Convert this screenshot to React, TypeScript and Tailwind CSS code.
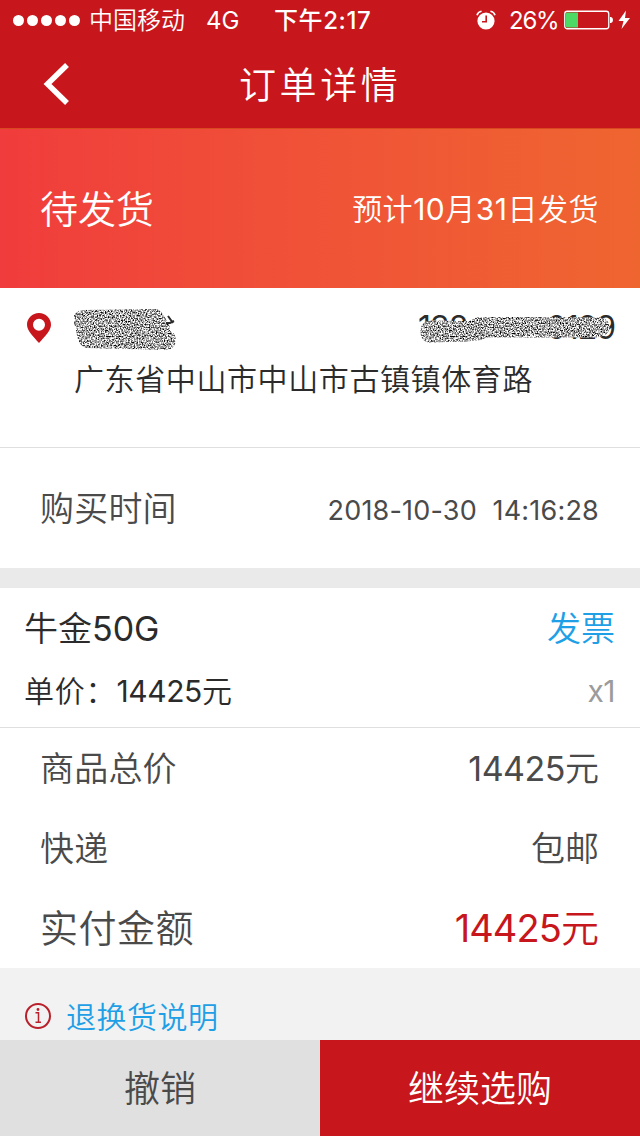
import {ReactNode} from "react";

interface RowProps {
    label: string,
    children: ReactNode
}

interface ScribbleProps {
    id: string,
    path: string,
    strokeWidth: number,
    className: string
}

function StatusBar() {
    return (
        <div className="flex h-10 items-center text-2xl leading-none">
            <div className="ml-[13px] flex gap-[3px]">
                {[0, 1, 2, 3, 4].map((dot) => (
                    <span key={dot} className="h-[11px] w-[11px] rounded-full bg-white"></span>
                ))}
            </div>
            <span className="ml-[9px] w-[97px] whitespace-nowrap pt-0.5">中国移动</span>
            <span className="ml-[20px] w-[50px] pt-0.5 font-normal">4G</span>
            <span className="ml-[18px] w-[120px] whitespace-nowrap pt-0.5 font-medium tracking-[0.6px]">下午2:17</span>
            <svg className="ml-[82px] mb-px" width="20" height="20" viewBox="0 0 20 20" fill="none">
                <circle cx="10" cy="11" r="8.6" fill="#fff"/>
                <path d="M1 5.2C1.6 3 3.4 1.5 5.6 1.2M19 5.2C18.4 3 16.6 1.5 14.4 1.2" stroke="#fff" strokeWidth="1.6"/>
                <path d="M10.2 5.6V11.8H6" stroke="#c7161c" strokeWidth="1.6"/>
            </svg>
            <span className="ml-[13px] w-[50px] pt-0.5 font-normal tracking-[-1.2px]">26%</span>
            <svg className="ml-[5px]" width="66" height="22" viewBox="0 0 66 22">
                <rect x=".75" y="2.25" width="44" height="17.5" rx="2.5" fill="none" stroke="#fff" strokeWidth="1.3"/>
                <path d="M3 3.5H14V18.5H3Q2 18.5 2 17.5V4.5Q2 3.5 3 3.5Z" fill="#4cd964"/>
                <path d="M46 8H47Q49 8.5 49 11T47 14H46Z" fill="#fff"/>
                <path d="M62 1.5L54.5 12H59.5L57.5 20L66 9H61Z" fill="#fff"/>
            </svg>
        </div>
    );
}

function Scribble({id, path, strokeWidth, className}: ScribbleProps) {
    return (
        <svg className={className} fill="none">
            <defs>
                <filter id={id} x="0" y="0" width="100%" height="100%" filterUnits="userSpaceOnUse"
                        colorInterpolationFilters="sRGB">
                    <feTurbulence type="fractalNoise" baseFrequency="0.73 0.67" numOctaves="2" seed="7"/>
                    <feColorMatrix values="2.6 0 0 0 -.65  2.6 0 0 0 -.65  2.6 0 0 0 -.65  0 0 0 0 1"/>
                    <feComposite in2="SourceGraphic" operator="in"/>
                </filter>
            </defs>
            <path d={path} stroke="#000" strokeWidth={strokeWidth} strokeLinecap="round" strokeLinejoin="round"
                  filter={`url(#${id})`}/>
        </svg>
    );
}

function Row({label, children}: RowProps) {
    return (
        <div
            className="flex h-20 items-center justify-between pl-10 pr-[41px] pt-0.5 text-[34px] leading-none text-[#4a4a4a]">
            <span className="tracking-[0.2px]">{label}</span>
            {children}
        </div>
    );
}

export default function App() {
    return (
        <div
            className="flex h-[1136px] w-[640px] flex-col overflow-hidden bg-white font-['Inter','Noto_Sans_CJK_SC',sans-serif] font-[350] text-[#2b2b2b]">
            <header className="h-32 bg-[#c7161c] text-white">
                <StatusBar/>
                <div className="flex h-[88px] items-center">
                    <svg className="ml-[43px]" width="28" height="44" viewBox="0 0 28 44" fill="none">
                        <path d="M24 3L4.5 22L24 41" stroke="#fff" strokeWidth="5.5"/>
                    </svg>
                    <h1 className="ml-[168px] pt-[3px] text-[37px] leading-none tracking-[3.6px]">订单详情</h1>
                </div>
            </header>

            <section
                className="flex h-40 items-center justify-between border-t border-[#d9491f] bg-linear-to-r from-[#f03c3c] to-[#ef6530] pl-10 pr-[41px] leading-none text-white">
                <span className="text-[38px]">待发货</span>
                <span className="text-[30px] tracking-[0.5px]">
                    预计<span className="font-normal">10</span>月<span className="font-normal">31</span>日发货
                </span>
            </section>

            <section className="flex h-40 border-b border-[#dfdfdf] pt-5">
                <svg className="ml-[26px] mt-[4px]" width="26" height="32" viewBox="0 0 26 32">
                    <path fillRule="evenodd" fill="#c7161c"
                          d="M13 1C6.3 1 1 6.2 1 12.7C1 19 7.5 24.5 13 31C18.5 24.5 25 19 25 12.7C25 6.2 19.7 1 13 1ZM13 6.8A6 6 0 1 1 13 18.8A6 6 0 1 1 13 6.8Z"/>
                </svg>
                <div className="ml-[22px] flex-1 pr-[25px]">
                    <div className="flex h-[41px] justify-between">
                        <div className="relative w-[104px]">
                            <Scribble id="name-noise" strokeWidth={20} className="absolute left-0 top-0 h-[43px] w-[104px]"
                                      path="M9 12L80 11L86 21L12 22L14 30L92 32"/>
                            <svg className="absolute left-[91px] top-[7px]" width="12" height="12" fill="none">
                                <path d="M3 1L8 8M1 8H5L9 6" stroke="#2b2b2b" strokeWidth="2"/>
                            </svg>
                        </div>
                        <div
                            className="relative flex w-[197px] justify-between text-[32px] font-normal leading-[40px] tracking-[-1px]">
                            <span>138</span>
                            <span>0129</span>
                            <Scribble id="phone-noise" strokeWidth={19} className="absolute right-0 top-0 h-[40px] w-[197px]"
                                      path="M12 25L50 24L62 18.500L182 19M12 22L60 23L66 20L178 20"/>
                        </div>
                    </div>
                    <p className="mt-[15px] text-[30px] leading-none tracking-[0.6px]">广东省中山市中山市古镇镇体育路</p>
                </div>
            </section>

            <section
                className="flex h-[120px] items-center justify-between pl-10 pr-[41px] pt-0.5 leading-none text-[#4a4a4a]">
                <span className="text-[34px] tracking-[0.2px]">购买时间</span>
                <span className="whitespace-pre pt-[3px] text-[27px] font-normal tracking-[0.2px]">2018-10-30  14:16:28</span>
            </section>
            <div className="h-5 bg-[#eaeaea]"></div>

            <section className="h-[140px] border-b border-[#dfdfdf] pl-6 pr-[25px] leading-none">
                <div className="flex h-20 items-center justify-between pt-0.5 text-[34px]">
                    <span>牛金<span className="font-normal">50G</span></span>
                    <span className="text-[#1e9fe6]">发票</span>
                </div>
                <div className="flex h-[44px] items-center justify-between pt-0.5 text-[30px]">
                    <span>
                        <span className="tracking-[0.8px]">单价：</span>
                        <span className="font-normal tracking-[-0.4px]">14425</span>元
                    </span>
                    <span className="font-normal tracking-[-0.5px] text-[#9b9b9b]">x1</span>
                </div>
            </section>

            <Row label="商品总价">
                <span><span className="font-normal tracking-[-0.5px]">14425</span>元</span>
            </Row>
            <Row label="快递">包邮</Row>
            <div className="flex h-20 items-center justify-between pl-10 pr-[41px] leading-none">
                <span className="text-[38px] tracking-[0.5px] text-[#4a4a4a]">实付金额</span>
                <span className="text-[38px] text-[#c7161c]">
                    <span className="font-normal tracking-[-0.9px]">14425</span>元
                </span>
            </div>

            <section className="flex h-[72px] items-center bg-[#f2f2f2] pt-6 leading-none">
                <svg className="ml-6" width="28" height="28" viewBox="0 0 28 28" fill="none" stroke="#b9202b">
                    <circle cx="14" cy="14" r="12" strokeWidth="2"/>
                    <path d="M11.5 10.8H14.5V20M11.5 20.2H17" strokeWidth="1.5"/>
                    <circle cx="14" cy="7.5" r="1.4" fill="#b9202b" stroke="none"/>
                </svg>
                <span className="ml-[14px] pt-0.5 text-[30px] tracking-[0.5px] text-[#1e9fe6]">退换货说明</span>
            </section>

            <footer className="flex h-24 text-[36px] leading-none">
                <button className="w-1/2 bg-[#e0e0e0] pt-0.5 text-[#4a4a4a]">撤销</button>
                <button className="w-1/2 bg-[#c7161c] pt-0.5 text-white">继续选购</button>
            </footer>
        </div>
    );
}
